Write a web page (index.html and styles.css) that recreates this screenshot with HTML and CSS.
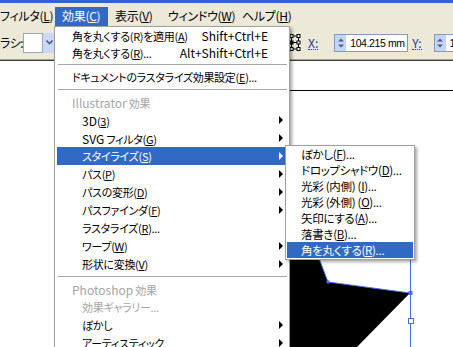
FILE: index.html
```html
<!DOCTYPE html>
<html lang="ja">
<head>
    <meta charset="UTF-8">
    <title>効果メニュー</title>
    <link rel="stylesheet" href="styles.css">
</head>
<body>
    <div class="window">
        <div class="titlebar-edge"></div>
        <div class="menubar">
            <div class="menubar-item filter">フィルタ(<u>L</u>)</div>
            <div class="menubar-item effect active">効果(<u>C</u>)</div>
            <div class="menubar-item view">表示(<u>V</u>)</div>
            <div class="menubar-item window-menu">ウィンドウ(<u>W</u>)</div>
            <div class="menubar-item">ヘルプ(<u>H</u>)</div>
        </div>

        <div class="toolbar">
            <div class="tool-left">
                <span class="brush-label">ラシ:</span>
                <span class="swatch"></span>
                <span class="dropbtn">
                    <svg width="7" height="5" viewBox="0 0 7 5"><polyline points="0.5,0.5 3.5,3.5 6.5,0.5" fill="none" stroke="#4d6185" stroke-width="1.6"/></svg>
                </span>
            </div>
            <div class="tool-right">
                <svg class="refpoint" width="18" height="18" viewBox="0 0 18 18">
                    <path d="M1.5 2H15.5M1.5 8.5H15.5M1.5 15H15.5M1.5 2V15M8.5 2V15M15.5 2V15" stroke="#000" stroke-width="1" fill="none"/>
                    <rect x="0" y="0.5" width="3" height="3" fill="#fff" stroke="#000"/>
                    <rect x="7" y="0.5" width="3" height="3" fill="#fff" stroke="#000"/>
                    <rect x="14" y="0.5" width="3" height="3" fill="#fff" stroke="#000"/>
                    <rect x="0" y="7" width="3" height="3" fill="#fff" stroke="#000"/>
                    <rect x="7" y="7" width="3" height="3" fill="#000" stroke="#000"/>
                    <rect x="14" y="7" width="3" height="3" fill="#fff" stroke="#000"/>
                    <rect x="0" y="13.5" width="3" height="3" fill="#fff" stroke="#000"/>
                    <rect x="7" y="13.5" width="3" height="3" fill="#fff" stroke="#000"/>
                    <rect x="14" y="13.5" width="3" height="3" fill="#fff" stroke="#000"/>
                </svg>
                <span class="coord-label x-label">X:</span>
                <span class="field">
                    <span class="spin">
                        <svg width="10" height="14" viewBox="0 0 10 14"><path d="M2 5.5L5 2.5L8 5.5Z M2 8.5L5 11.5L8 8.5Z" fill="#4d6185"/></svg>
                    </span>
                    <span class="value">104.215 mm</span>
                </span>
                <span class="coord-label y-label">Y:</span>
                <span class="field">
                    <span class="spin">
                        <svg width="10" height="14" viewBox="0 0 10 14"><path d="M2 5.5L5 2.5L8 5.5Z M2 8.5L5 11.5L8 8.5Z" fill="#4d6185"/></svg>
                    </span>
                    <span class="value">198.532 mm</span>
                </span>
            </div>
        </div>

        <div class="canvas">
            <svg class="artwork" width="453" height="286" viewBox="0 61 453 286">
                <line x1="100" y1="90.5" x2="453" y2="90.5" stroke="#000" stroke-width="1"/>
                <polygon points="250,200 297,200 328,282 410,293 357,347 250,347" fill="#000"/>
                <polyline points="297,200 328,282 410,293" fill="none" stroke="#4a6ee0" stroke-width="1"/>
                <line x1="410.5" y1="150" x2="410.5" y2="347" stroke="#4a6ee0" stroke-width="1"/>
                <rect x="326.5" y="280.5" width="3" height="3" fill="#4a6ee0"/>
                <rect x="408.5" y="291" width="4" height="4" fill="#4a6ee0"/>
                <rect x="408.5" y="318.5" width="5" height="5" fill="#fff" stroke="#4a6ee0" stroke-width="1"/>
            </svg>
        </div>

        <div class="menu effect-menu">
            <div class="item short"><span class="label">角を丸くする(R)を適用(<u>A</u>)</span><span class="key">Shift+Ctrl+E</span></div>
            <div class="item short"><span class="label">角を丸くする(<u>R</u>)...</span><span class="key">Alt+Shift+Ctrl+E</span></div>
            <div class="sep"></div>
            <div class="item"><span class="label">ドキュメントのラスタライズ効果設定(<u>E</u>)...</span></div>
            <div class="sep"></div>
            <div class="item disabled"><span class="label"><span class="en">Illustrator</span> 効果</span></div>
            <div class="item indent"><span class="label"><span class="en">3D</span>(<u>3</u>)</span><span class="arrow"></span></div>
            <div class="item indent"><span class="label"><span class="en">SVG</span> フィルタ(<u>G</u>)</span><span class="arrow"></span></div>
            <div class="item indent active"><span class="label">スタイライズ(<u>S</u>)</span><span class="arrow"></span></div>
            <div class="item indent"><span class="label">パス(<u>P</u>)</span><span class="arrow"></span></div>
            <div class="item indent"><span class="label">パスの変形(<u>D</u>)</span><span class="arrow"></span></div>
            <div class="item indent"><span class="label">パスファインダ(<u>F</u>)</span><span class="arrow"></span></div>
            <div class="item indent"><span class="label">ラスタライズ(<u>R</u>)...</span></div>
            <div class="item indent"><span class="label">ワープ(<u>W</u>)</span><span class="arrow"></span></div>
            <div class="item indent"><span class="label">形状に変換(<u>V</u>)</span><span class="arrow"></span></div>
            <div class="sep"></div>
            <div class="item disabled"><span class="label"><span class="en">Photoshop</span> 効果</span></div>
            <div class="item indent disabled"><span class="label">効果ギャラリー...</span></div>
            <div class="item indent"><span class="label">ぼかし</span><span class="arrow"></span></div>
            <div class="item indent"><span class="label">アーティスティック</span><span class="arrow"></span></div>
        </div>

        <div class="menu submenu">
            <div class="item"><span class="label">ぼかし(<u>F</u>)...</span></div>
            <div class="item"><span class="label">ドロップシャドウ(<u>D</u>)...</span></div>
            <div class="item"><span class="label">光彩 (内側) (<u>I</u>)...</span></div>
            <div class="item"><span class="label">光彩 (外側) (<u>O</u>)...</span></div>
            <div class="item"><span class="label">矢印にする(<u>A</u>)...</span></div>
            <div class="item"><span class="label">落書き(<u>B</u>)...</span></div>
            <div class="item active"><span class="label">角を丸くする(<u>R</u>)...</span></div>
        </div>
    </div>
</body>
</html>
```

FILE: styles.css
```css
* {
    box-sizing: border-box;
}
body {
    margin: 0;
    background-color: #fff;
    font-family: "Noto Sans CJK JP", "Noto Sans", sans-serif;
    font-size: 12px;
    font-feature-settings: "palt";
    color: #000;
}
u {
    text-underline-offset: 1px;
}
.window {
    position: relative;
    width: 453px;
    height: 347px;
    overflow: hidden;
    display: flex;
    flex-direction: column;
}
.titlebar-edge {
    height: 3px;
    background-color: #3063d3;
}

/* menu bar */
.menubar {
    height: 24px;
    display: flex;
    align-items: flex-end;
    background-color: #ece9d8;
}
.menubar-item {
    height: 20px;
    line-height: 18px;
    padding-left: 7px;
    white-space: nowrap;
    flex-shrink: 0;
    letter-spacing: -0.3px;
}
.menubar-item.filter {
    width: 62px;
    margin-left: -7px;
}
.menubar-item.effect,
.menubar-item.view {
    width: 53px;
}
.menubar-item.window-menu {
    width: 74px;
}
.menubar-item.active {
    background-color: #316ac5;
    color: #fff;
}

/* tool bar */
.toolbar {
    height: 34px;
    display: flex;
    align-items: center;
    background-color: #ece9d8;
    border-bottom: 1px solid #a29f90;
    white-space: nowrap;
}
.tool-left {
    width: 283px;
    flex-shrink: 0;
    display: flex;
    align-items: center;
}
.brush-label {
    width: 23px;
    letter-spacing: -0.5px;
}
.swatch {
    width: 20px;
    height: 20px;
    background-color: #fff;
    border: 1px solid #9aa5b5;
}
.dropbtn {
    width: 12px;
    height: 20px;
    display: flex;
    align-items: center;
    justify-content: center;
    background-color: #cdd9f4;
}
.tool-right {
    display: flex;
    align-items: center;
    flex-shrink: 0;
}
.refpoint {
    display: block;
}
.coord-label {
    color: #1d3b9a;
    font-size: 12px;
    line-height: 13px;
    border-bottom: 1px dotted #1d3b9a;
}
.x-label {
    margin: 0 16px 0 7px;
}
.y-label {
    margin: 0 12px 0 4px;
}
.field {
    width: 74px;
    height: 18px;
    display: flex;
    align-items: center;
    background-color: #fff;
    border: 1px solid #7f9db9;
    flex-shrink: 0;
    overflow: hidden;
}
.spin {
    width: 11px;
    height: 16px;
    display: flex;
    align-items: center;
    justify-content: center;
    background-color: #c4d4f7;
    flex-shrink: 0;
}
.value {
    margin-left: 4px;
    font-family: "Liberation Sans", Arial, sans-serif;
    font-size: 10.5px;
    letter-spacing: -0.4px;
}

/* drawing area */
.canvas {
    flex: 1;
    background-color: #fff;
    border-top: 1px solid #3e3c36;
}
.artwork {
    display: block;
}

/* drop-down menus */
.menu {
    position: absolute;
    background-color: #fff;
    border: 1px solid #a0a0a0;
    box-shadow: 2px 2px 3px rgba(0, 0, 0, 0.35);
    white-space: nowrap;
}
.effect-menu {
    left: 54px;
    top: 26px;
    width: 236px;
}
.submenu {
    left: 285px;
    top: 145px;
    width: 130px;
    padding-bottom: 1px;
}
.item {
    height: 18px;
    display: flex;
    align-items: center;
    margin: 0 2px;
    padding: 0 4px 0 15px;
}
.item.short {
    height: 17px;
}
.item.indent {
    padding-left: 25px;
}
.item .label {
    flex: 1;
    font-size: 11px;
    letter-spacing: -0.3px;
}
.item .en {
    font-size: 12px;
    letter-spacing: 0;
}
.item .key {
    margin-right: 15px;
}
.item .arrow {
    width: 0;
    height: 0;
    border-left: 4px solid #000;
    border-top: 4px solid transparent;
    border-bottom: 4px solid transparent;
}
.item.disabled {
    color: #a5a5a5;
}
.item.active {
    background-color: #316ac5;
    color: #fff;
}
.item.active .arrow {
    border-left-color: #fff;
}
.sep {
    height: 7px;
    display: flex;
    align-items: center;
    margin: 0 2px 0 3px;
}
.sep::before {
    content: "";
    flex: 1;
    height: 1px;
    background-color: #a8a8a8;
}
.submenu .item {
    height: 16px;
    margin: 0 1px;
    padding-left: 14px;
}
.submenu .item .label {
    font-size: 11.5px;
}
```
